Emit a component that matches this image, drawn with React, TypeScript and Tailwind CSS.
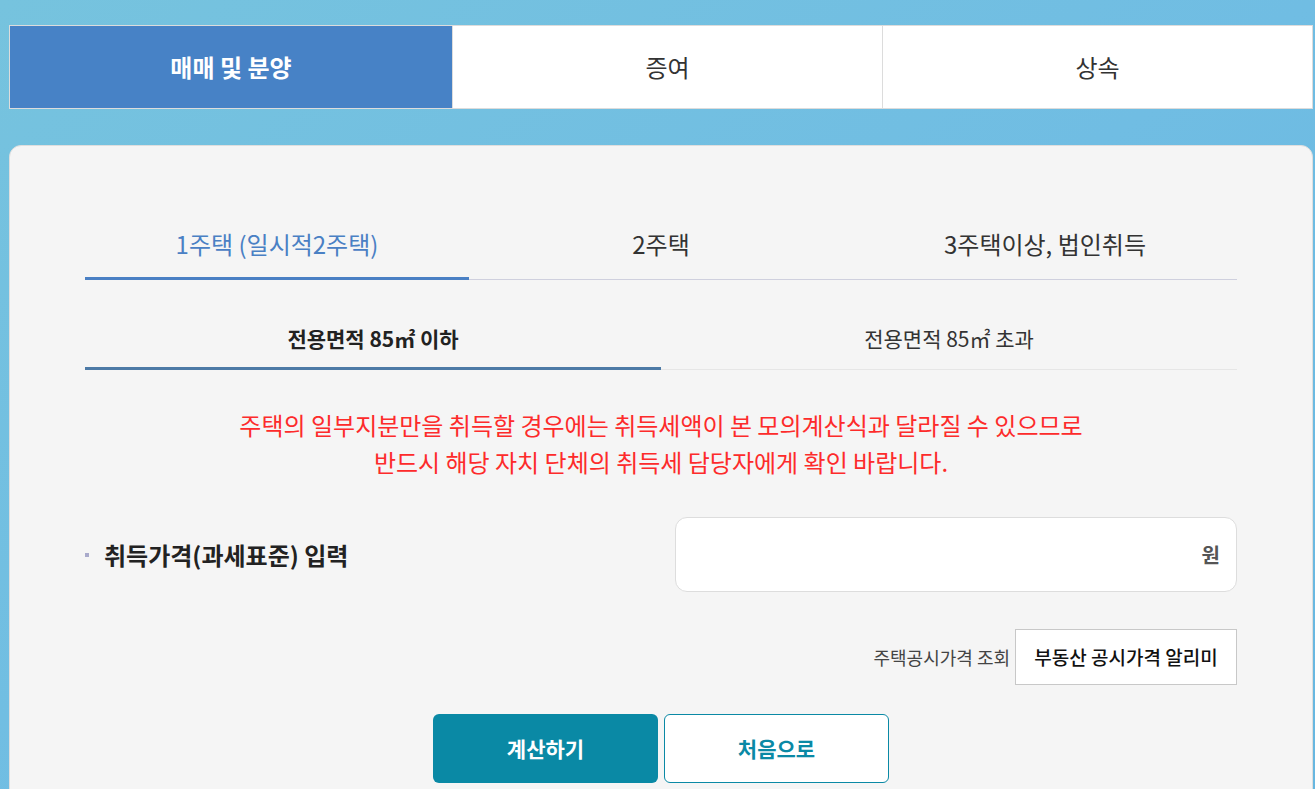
import { useState } from 'react';

const FONT = "font-['Noto_Sans_CJK_KR','Noto_Sans',sans-serif]";

const topTabs = ['매매 및 분양', '증여', '상속'];
const houseTabs = ['1주택 (일시적2주택)', '2주택', '3주택이상, 법인취득'];
const areaTabs = ['전용면적 85㎡ 이하', '전용면적 85㎡ 초과'];

export default function App() {
  const [top, setTop] = useState(0);
  const [house, setHouse] = useState(0);
  const [area, setArea] = useState(0);
  const [price, setPrice] = useState('');

  return (
    <div
      className={`${FONT} min-h-[789px] bg-gradient-to-br from-[#76c3de] via-[#70bde3] to-[#66b6e0] pl-[9px] pr-[2px] pt-[25px] pb-10`}
    >
      {/* top tabs */}
      <div className="flex h-[84px] border border-[#dcdcdc] bg-white">
        {topTabs.map((t, i) => (
          <button
            key={t}
            onClick={() => setTop(i)}
            className={`flex items-center justify-center text-[24px] ${
              i > 0 ? 'border-l border-[#dcdcdc]' : ''
            } ${i === 0 ? 'flex-[443]' : 'flex-[430]'} ${
              top === i ? 'bg-[#4782c6] font-bold text-white' : 'bg-white text-[#333]'
            }`}
          >
            {t}
          </button>
        ))}
      </div>

      {/* card */}
      <div className="mt-[36px] rounded-[12px] border border-[#dedede] bg-[#f5f5f5] px-[75px] pt-[74px] pb-10">
        {/* house count tabs */}
        <div className="flex border-b border-[#cfd0de]">
          {houseTabs.map((t, i) => (
            <button
              key={t}
              onClick={() => setHouse(i)}
              className={`-mb-px flex h-[60px] flex-1 items-start justify-center border-b-[3px] pt-[6px] text-[24px] ${
                house === i ? 'border-[#4a80c4] text-[#4a80c4]' : 'border-transparent text-[#333]'
              }`}
            >
              {t}
            </button>
          ))}
        </div>

        {/* area tabs */}
        <div className="mt-[34px] flex border-b border-[#e6e6e6]">
          {areaTabs.map((t, i) => (
            <button
              key={t}
              onClick={() => setArea(i)}
              className={`-mb-px flex h-[56px] flex-1 items-start justify-center border-b-[3px] pt-[9px] text-[21px] ${
                area === i
                  ? 'border-[#4d7aa6] font-bold text-[#222]'
                  : 'border-transparent text-[#333]'
              }`}
            >
              {t}
            </button>
          ))}
        </div>

        <p className="mt-[36px] text-center text-[24px] leading-[37px] text-[#fd2b2b]">
          주택의 일부지분만을 취득할 경우에는 취득세액이 본 모의계산식과 달라질 수 있으므로
          <br />
          반드시 해당 자치 단체의 취득세 담당자에게 확인 바랍니다.
        </p>

        {/* price input */}
        <div className="mt-[37px] flex items-center justify-between">
          <div className="flex items-center gap-[15px]">
            <span className="h-[4px] w-[4px] bg-[#a9aacb]" />
            <span className="text-[24px] font-bold text-[#222]">취득가격(과세표준) 입력</span>
          </div>
          <div className="flex h-[75px] w-[562px] items-center rounded-[12px] border border-[#dddddd] bg-white pl-5 pr-[16px]">
            <input
              value={price}
              onChange={(e) => setPrice(e.target.value)}
              className="min-w-0 flex-1 bg-transparent text-right text-[20px] outline-none"
            />
            <span className="ml-2 text-[20px] font-bold text-[#555]">원</span>
          </div>
        </div>

        {/* lookup */}
        <div className="mt-[37px] flex items-center justify-end gap-[5px]">
          <span className="text-[18px] text-[#444]">주택공시가격 조회</span>
          <button className="h-[56px] w-[222px] border border-[#c8c8c8] bg-white text-[19px] font-medium text-[#111]">
            부동산 공시가격 알리미
          </button>
        </div>

        {/* actions */}
        <div className="mt-[29px] flex justify-center gap-[6px]">
          <button className="h-[69px] w-[225px] rounded-[6px] bg-[#0a89a5] text-[21px] font-bold text-white">
            계산하기
          </button>
          <button
            onClick={() => setPrice('')}
            className="h-[69px] w-[225px] rounded-[6px] border border-[#0a89a5] bg-white text-[21px] font-bold text-[#0a89a5]"
          >
            처음으로
          </button>
        </div>
      </div>
    </div>
  );
}
